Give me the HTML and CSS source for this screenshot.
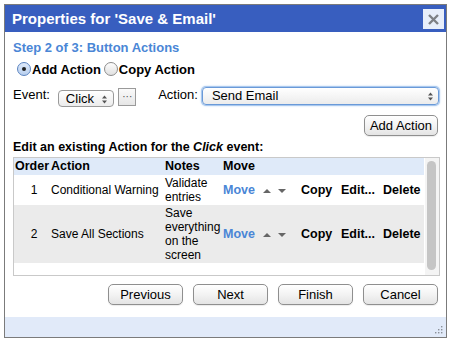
FILE: index.html
```html
<!DOCTYPE html>
<html>
<head>
<meta charset="utf-8">
<link rel="stylesheet" href="styles.css">
</head>
<body>
<div class="dialog">
  <div class="titlebar">
    <span class="title">Properties for 'Save &amp; Email'</span>
    <span class="close"><svg width="13" height="13" viewBox="0 0 13 13"><path d="M2 2 L11 11 M11 2 L2 11" stroke="#7d8085" stroke-width="2.4"/></svg></span>
  </div>
  <div class="content">
    <div class="step">Step 2 of 3: Button Actions</div>
    <div class="radios">
      <span class="radio on"><span class="dot"></span></span><span class="rlabel">Add Action</span>
      <span class="radio"></span><span class="rlabel">Copy Action</span>
    </div>
    <div class="eventrow">
      <span class="lbl">Event:</span>
      <span class="select small">Click<span class="updown"><svg width="5" height="9" viewBox="0 0 5 9"><path d="M0 3.5 L2.5 0.5 L5 3.5 Z M0 5.5 L2.5 8.5 L5 5.5 Z" fill="#555"/></svg></span></span>
      <span class="dots">···</span>
      <span class="lbl act">Action:</span>
      <span class="select big">Send Email<span class="updown"><svg width="5" height="9" viewBox="0 0 5 9"><path d="M0 3.5 L2.5 0.5 L5 3.5 Z M0 5.5 L2.5 8.5 L5 5.5 Z" fill="#555"/></svg></span></span>
    </div>
    <div class="addrow"><span class="btn addbtn">Add Action</span></div>
    <div class="edit">Edit an existing Action for the <i>Click</i> event:</div>
    <div class="tablebox">
      <div class="tablearea">
        <table>
          <colgroup>
            <col class="c-order"><col class="c-action"><col class="c-notes"><col class="c-move"><col class="c-arrows"><col class="c-copy"><col class="c-edit"><col class="c-del">
          </colgroup>
          <tr class="head">
            <th>Order</th><th>Action</th><th>Notes</th><th colspan="5">Move</th>
          </tr>
          <tr class="r1">
            <td class="num">1</td><td>Conditional Warning</td><td>Validate entries</td>
            <td class="mv">Move</td>
            <td class="arrows"><span class="up"></span><span class="down"></span></td>
            <td class="op">Copy</td><td class="op">Edit...</td><td class="op">Delete</td>
          </tr>
          <tr class="r2">
            <td class="num">2</td><td>Save All Sections</td><td>Save everything on the screen</td>
            <td class="mv">Move</td>
            <td class="arrows"><span class="up"></span><span class="down"></span></td>
            <td class="op">Copy</td><td class="op">Edit...</td><td class="op">Delete</td>
          </tr>
        </table>
      </div>
      <div class="scroll"><div class="thumb"></div></div>
    </div>
    <div class="buttons">
      <span class="btn nav">Previous</span>
      <span class="btn nav">Next</span>
      <span class="btn nav">Finish</span>
      <span class="btn nav">Cancel</span>
    </div>
  </div>
  <div class="footer">
    <svg width="9" height="9" viewBox="0 0 9 9" class="grip"><g fill="#8a9099"><rect x="7" y="1" width="1.4" height="1.4"/><rect x="4" y="4" width="1.4" height="1.4"/><rect x="7" y="4" width="1.4" height="1.4"/><rect x="1" y="7" width="1.4" height="1.4"/><rect x="4" y="7" width="1.4" height="1.4"/><rect x="7" y="7" width="1.4" height="1.4"/></g></svg>
  </div>
</div>
</body>
</html>
```

FILE: styles.css
```css
html, body {
  margin: 0;
  padding: 0;
  background: #fff;
}
body {
  font-family: "Liberation Sans", Arial, sans-serif;
  color: #000;
}
.dialog {
  margin: 4px 0 0 4px;
  width: 443px;
  height: 334px;
  box-sizing: border-box;
  border: 1px solid #7b7b7b;
  display: flex;
  flex-direction: column;
  background: #fff;
}
.titlebar {
  height: 27px;
  background: #385ebf;
  display: flex;
  align-items: center;
  justify-content: space-between;
  padding: 0 2px 0 7px;
}
.title {
  color: #fff;
  font-weight: bold;
  font-size: 15px;
  margin-top: -1px;
}
.close {
  width: 21px;
  height: 20px;
  background: #e7eefa;
  display: flex;
  align-items: center;
  justify-content: center;
  margin-top: 1px;
}
.content {
  flex: 1;
  padding: 8px 7px 0 8px;
}
.step {
  color: #4a86d6;
  font-weight: bold;
  font-size: 13px;
  line-height: 16px;
}
.radios {
  display: flex;
  align-items: center;
  height: 18px;
  margin-top: 4px;
  padding-left: 4px;
  font-weight: bold;
  font-size: 13px;
}
.radio {
  width: 12px;
  height: 12px;
  border-radius: 50%;
  border: 1px solid #8c8c8c;
  background: linear-gradient(#fdfdfd, #e0e0e0);
  display: flex;
  align-items: center;
  justify-content: center;
  margin-right: 1px;
}
.radio.on {
  border-color: #5a83c0;
  background: linear-gradient(#dfeafa, #b8cfee);
}
.radio .dot {
  width: 4px;
  height: 4px;
  border-radius: 50%;
  background: #222;
}
.rlabel {
  margin-right: 3px;
}
.eventrow {
  display: flex;
  align-items: flex-start;
  margin-top: 9px;
  height: 20px;
  font-size: 13px;
}
.lbl {
  line-height: 15px;
}
.lbl.act {
  margin-left: 22px;
}
.select {
  box-sizing: border-box;
  border: 1px solid #9a9a9a;
  border-radius: 4px;
  background: linear-gradient(#ffffff, #ececec);
  font-size: 13px;
  line-height: 14px;
  display: flex;
  align-items: center;
  justify-content: space-between;
}
.select.small {
  width: 57px;
  height: 17px;
  margin-left: 8px;
  margin-top: 3px;
  padding: 1px 6px 0 7px;
}
.select.big {
  width: 240px;
  height: 18px;
  margin-left: 4px;
  padding: 0 5px 0 9px;
  border-color: #6a9ad8;
  box-shadow: 0 0 0 1px #a9c8ee, 0 0 2px 1px #bcd6f3;
}
.updown {
  display: flex;
  align-items: center;
}
.dots {
  box-sizing: border-box;
  width: 18px;
  height: 18px;
  margin-left: 4px;
  margin-top: 1px;
  border: 1px solid #9a9a9a;
  background: linear-gradient(#fafafa, #e6e6e6);
  font-size: 10px;
  line-height: 15px;
  text-align: center;
  color: #444;
}
.addrow {
  display: flex;
  justify-content: flex-end;
  margin-top: 8px;
  padding-right: 1px;
}
.btn {
  box-sizing: border-box;
  border: 1px solid #8f8f8f;
  border-radius: 5px;
  background: linear-gradient(#ffffff 0%, #f3f3f3 50%, #e4e4e4 100%);
  font-size: 13px;
  text-align: center;
  box-shadow: 0 1px 1px rgba(0,0,0,0.08);
}
.addbtn {
  width: 74px;
  height: 21px;
  line-height: 19px;
}
.edit {
  font-weight: bold;
  font-size: 12.5px;
  line-height: 16px;
  margin-top: 3px;
}
.tablebox {
  margin-top: 2px;
  width: 427px;
  height: 119px;
  box-sizing: border-box;
  border: 1px solid #c9c9c9;
  display: flex;
}
.tablearea {
  flex: 1;
  overflow: hidden;
}
table {
  border-collapse: collapse;
  table-layout: fixed;
  width: 410px;
  font-size: 12px;
}
.c-order { width: 36px; }
.c-action { width: 114px; }
.c-notes { width: 58px; }
.c-move { width: 38px; }
.c-arrows { width: 40px; }
.c-copy { width: 40px; }
.c-edit { width: 42px; }
.c-del { width: 42px; }
th, td {
  padding: 0 0 0 1px;
  text-align: left;
  vertical-align: middle;
  line-height: 14px;
}
tr.head {
  background: #dfeaf9;
  height: 17px;
}
tr.head th {
  font-weight: bold;
  font-size: 12.5px;
  line-height: 17px;
}
tr.r1 {
  background: #fff;
  height: 30px;
}
tr.r1 td {
  padding-top: 1px;
  padding-bottom: 1px;
}
tr.r2 {
  background: #ebebeb;
  height: 58px;
}
td.num {
  text-align: center;
  padding-left: 4px;
}
td.mv {
  color: #4a86d6;
  font-weight: bold;
  font-size: 12.5px;
}
td.op {
  font-weight: bold;
  font-size: 12.5px;
}
.arrows {
  white-space: nowrap;
}
.up, .down {
  display: inline-block;
  width: 0;
  height: 0;
  border-left: 4px solid transparent;
  border-right: 4px solid transparent;
  margin-left: 2px;
  vertical-align: middle;
}
.up {
  border-bottom: 4px solid #666;
}
.down {
  border-top: 4px solid #666;
  margin-left: 7px;
}
.scroll {
  width: 14px;
  background: #f4f4f4;
  padding: 3px 2px 2px 2px;
  box-sizing: border-box;
}
.thumb {
  height: 109px;
  width: 9px;
  border-radius: 5px;
  background: #c5c5c5;
}
.buttons {
  display: flex;
  justify-content: flex-end;
  gap: 10px;
  margin-top: 8px;
  padding-right: 1px;
}
.nav {
  width: 75px;
  height: 21px;
  line-height: 19px;
}
.footer {
  height: 20px;
  background: #e1eaf9;
  display: flex;
  justify-content: flex-end;
  align-items: flex-end;
  padding: 0 3px 3px 0;
  box-sizing: border-box;
}
```
